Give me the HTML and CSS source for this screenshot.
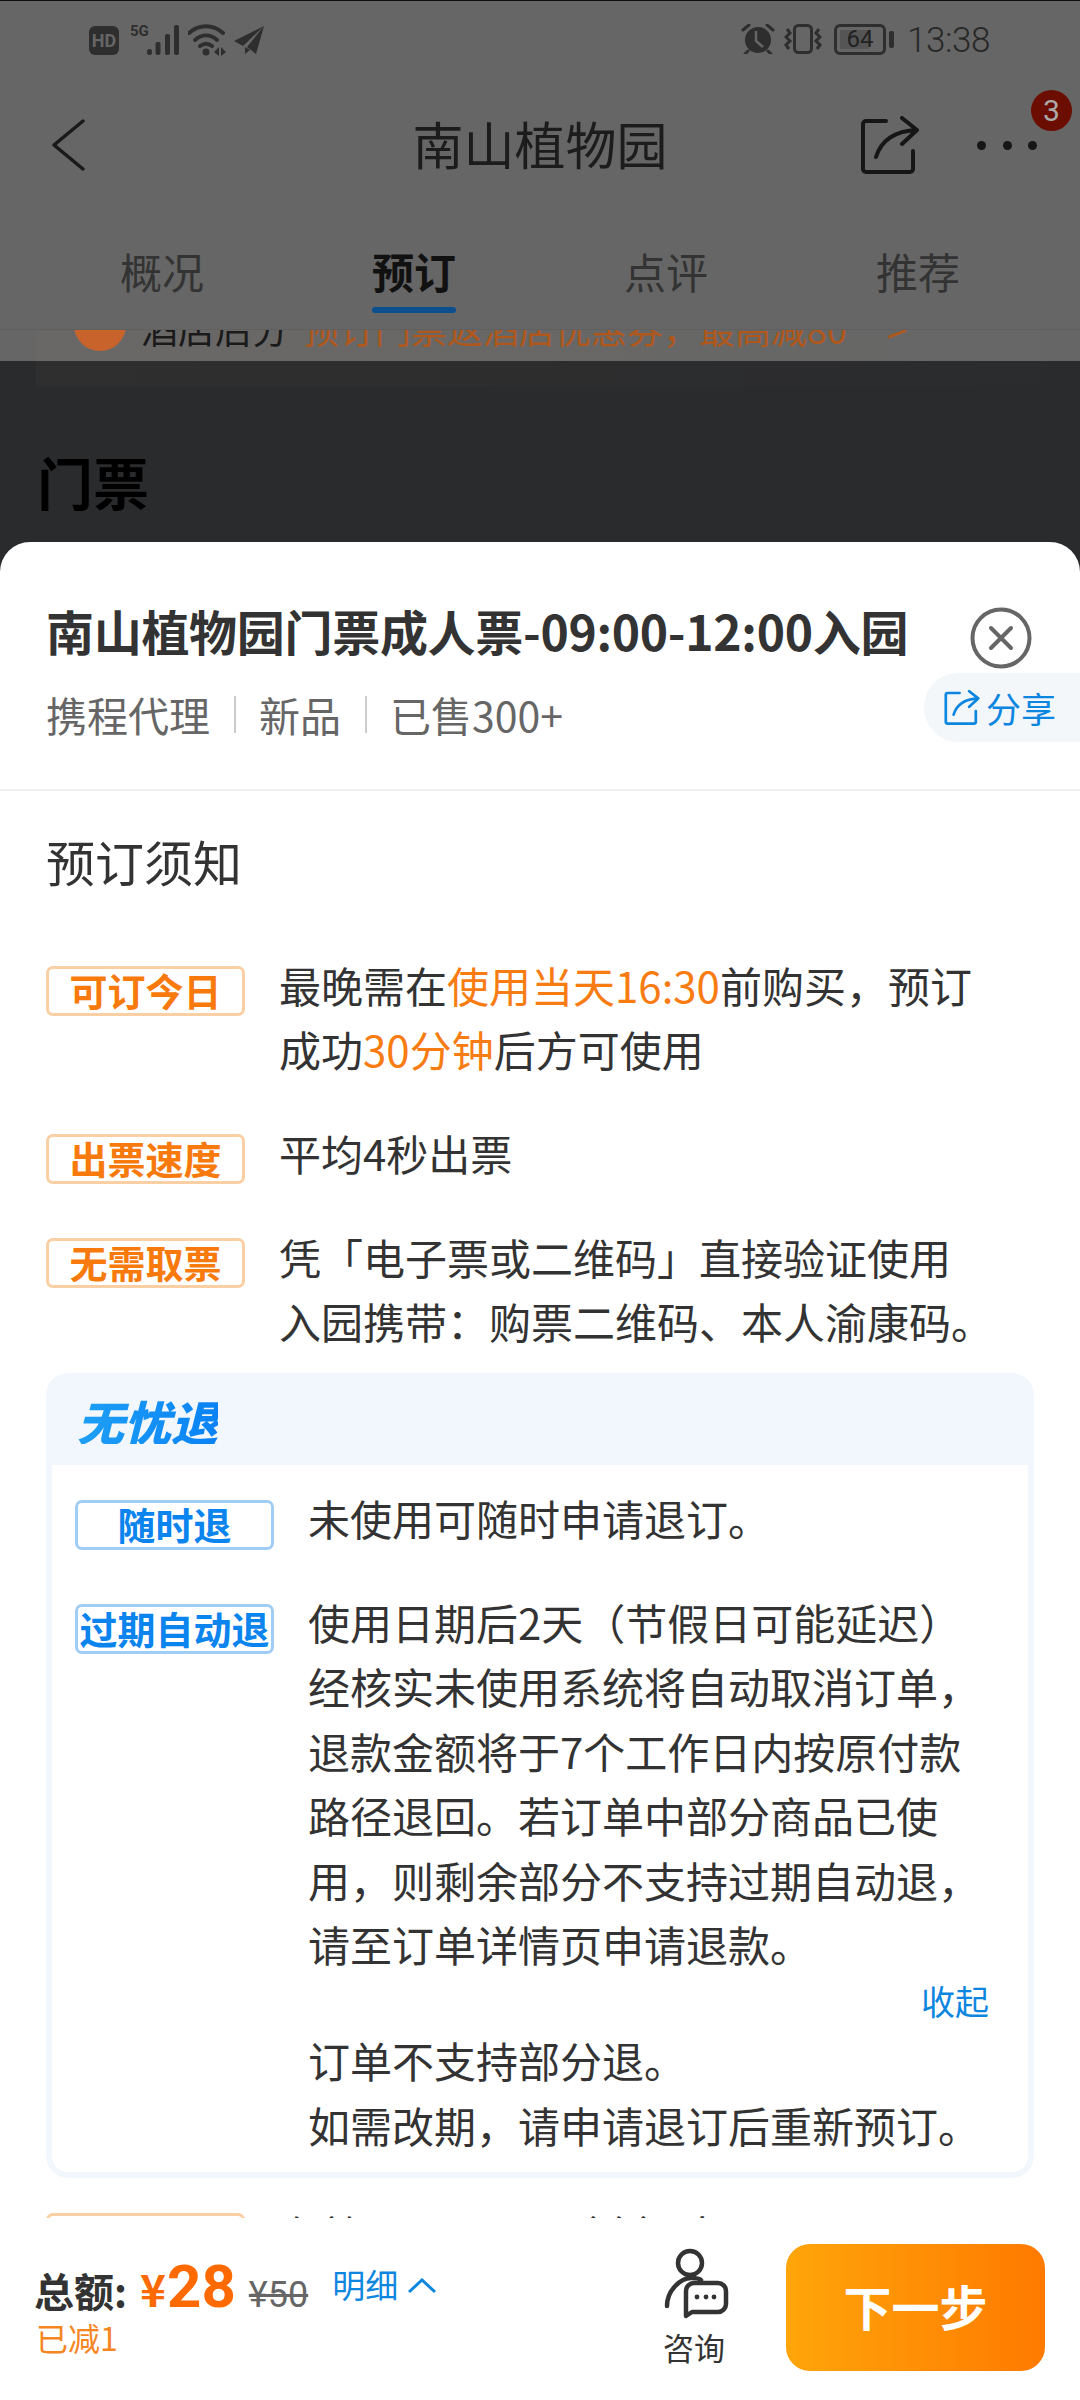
FILE: index.html
```html
<!DOCTYPE html>
<html lang="zh-CN">
<head>
<meta charset="utf-8">
<title>南山植物园</title>
<link rel="stylesheet" href="styles.css">
</head>
<body>
<div class="page">
  <header class="topbar">
    <div class="status">
      <div class="status-left">
        <span class="hd">HD</span>
        <span class="five-g">5G</span>
        <svg class="ic-bars" viewBox="0 0 32 30"><rect x="0" y="24" width="5" height="6" rx="2.5"/><rect x="8.5" y="17" width="5" height="13" rx="2"/><rect x="18" y="9" width="5" height="21" rx="2"/><rect x="27" y="0" width="5" height="30" rx="2"/></svg>
        <svg class="ic-wifi" viewBox="0 0 38 32"><path class="stroke" d="M1 9C11 0 25 0 35 9"/><path class="stroke" d="M7 16C14 10 22 10 29 16"/><path class="stroke" d="M12 22C16 19 20 19 24 22"/><circle cx="18" cy="28" r="3.5"/><path d="M26 28l5-5v9zM33 23l5 5-5 4z"/></svg>
        <svg class="ic-plane" viewBox="0 0 30 28"><path d="M30 0L0 15l9 5zM30 0L13 21l9 7zM11 21l0 7 5-4z"/></svg>
      </div>
      <div class="status-right">
        <svg class="ic-alarm" viewBox="0 0 34 30"><circle cx="17" cy="16" r="13"/><path class="stroke-thin" d="M2 6L8 1M32 6L26 1M7 27L4 30M27 27L30 30"/><path class="hand" d="M15 7V17L22 23"/></svg>
        <svg class="ic-vibrate" viewBox="0 0 38 30"><rect x="10.5" y="1.5" width="17" height="27" rx="4"/><path d="M3 5L6 9 2 13 6 17 2 21 5 25M35 5L32 9 36 13 32 17 36 21 33 25"/></svg>
        <div class="battery"><span class="battery-num">64</span></div>
        <span class="battery-nub"></span>
        <span class="clock">13:38</span>
      </div>
    </div>
    <nav class="nav">
      <svg class="ic-back" viewBox="0 0 34 52"><path d="M31 2L2 26 31 50"/></svg>
      <h1 class="nav-title">南山植物园</h1>
      <div class="nav-actions">
        <svg class="ic-share" viewBox="0 0 60 60"><path d="M26 5H6a3 3 0 0 0-3 3V53a3 3 0 0 0 3 3H50a3 3 0 0 0 3-3V35M16 41C21 25 34 15 57 14M42 2L57 14 42 28"/></svg>
        <div class="more"><i></i><i></i><i></i><span class="badge">3</span></div>
      </div>
    </nav>
    <div class="tabs">
      <div class="tab">概况</div>
      <div class="tab tab-active">预订</div>
      <div class="tab">点评</div>
      <div class="tab">推荐</div>
    </div>
  </header>

  <section class="behind">
    <div class="promo">
      <div class="promo-row">
        <span class="promo-dot"></span>
        <span class="promo-label">酒店后分</span>
        <span class="promo-text">预订门票返酒店优惠券，最高减80</span>
        <span class="promo-arrow">&gt;</span>
      </div>
    </div>
    <h2 class="behind-title">门票</h2>
  </section>

  <section class="sheet">
    <div class="sheet-head">
      <div class="title-row">
        <h2 class="sheet-title">南山植物园门票成人票-09:00-12:00入园</h2>
        <svg class="ic-close" viewBox="0 0 62 62"><circle cx="31" cy="31" r="28.5"/><path d="M21 21L41 41M41 21L21 41"/></svg>
      </div>
      <div class="sub-row">
        <div class="meta">
          <span>携程代理</span><i class="sep"></i><span>新品</span><i class="sep"></i><span>已售300+</span>
        </div>
        <div class="share-pill">
          <svg class="ic-share-small" viewBox="0 0 60 60"><path d="M26 5H6a3 3 0 0 0-3 3V53a3 3 0 0 0 3 3H50a3 3 0 0 0 3-3V35M16 41C21 25 34 15 57 14M42 2L57 14 42 28"/></svg>
          <span>分享</span>
        </div>
      </div>
    </div>

    <div class="sheet-body">
      <h3 class="notice-title">预订须知</h3>

      <div class="row">
        <span class="tag">可订今日</span>
        <p class="row-text">最晚需在<em>使用当天16:30</em>前购买，预订<br>成功<em>30分钟</em>后方可使用</p>
      </div>
      <div class="row">
        <span class="tag">出票速度</span>
        <p class="row-text">平均4秒出票</p>
      </div>
      <div class="row">
        <span class="tag">无需取票</span>
        <p class="row-text">凭「电子票或二维码」直接验证使用<br>入园携带：购票二维码、本人渝康码。</p>
      </div>

      <div class="refund">
        <div class="refund-head"><span class="refund-logo">无忧退</span></div>
        <div class="refund-body">
          <div class="row">
            <span class="tag tag-blue">随时退</span>
            <p class="row-text">未使用可随时申请退订。</p>
          </div>
          <div class="row row-flush">
            <span class="tag tag-blue">过期自动退</span>
            <p class="row-text">使用日期后2天（节假日可能延迟）<br>经核实未使用系统将自动取消订单，<br>退款金额将于7个工作日内按原付款<br>路径退回。若订单中部分商品已使<br>用，则剩余部分不支持过期自动退，<br>请至订单详情页申请退款。</p>
          </div>
          <div class="collapse">收起</div>
          <p class="row-text refund-note">订单不支持部分退。<br>如需改期，请申请退订后重新预订。</p>
        </div>
      </div>

      <div class="row row-peek">
        <span class="tag">入园时间</span>
        <p class="row-text">有效2023-10-1（含）当日</p>
      </div>
    </div>

    <footer class="bottom">
      <div class="price">
        <div class="price-line">
          <span class="total-label">总额:</span>
          <span class="yen">¥</span><span class="amount">28</span>
          <span class="old">¥50</span>
          <span class="detail">明细</span>
          <svg class="ic-up" viewBox="0 0 30 16"><path d="M2 14L15 2 28 14"/></svg>
        </div>
        <div class="reduced">已减1</div>
      </div>
      <div class="consult">
        <svg class="ic-consult" viewBox="0 0 72 75"><circle cx="31" cy="18" r="12"/><path d="M8 61C8 45 22 33 32 33 36 33 40 33 42 35"/><path d="M27 71V46a8 8 0 0 1 8-8H59a8 8 0 0 1 8 8V59a8 8 0 0 1-8 8H33Z"/><circle class="dot" cx="38" cy="52" r="2.4"/><circle class="dot" cx="47" cy="52" r="2.4"/><circle class="dot" cx="55" cy="52" r="2.4"/></svg>
        <span>咨询</span>
      </div>
      <button class="next">下一步</button>
    </footer>
  </section>
</div>
</body>
</html>
```
FILE: styles.css
```css
* { box-sizing: border-box; }
html, body { margin: 0; padding: 0; }
body { font-family: "Noto Sans CJK SC", "Noto Sans", sans-serif; background: #fff; }
h1, h2, h3, p { margin: 0; font-weight: normal; }
em { font-style: normal; color: #f87c12; }
i { font-style: normal; }

.page { width: 1080px; height: 2400px; overflow: hidden; display: flex; flex-direction: column; background: #2a2b2d; }

/* dimmed header */
.topbar { height: 330px; background: #666; border-top: 1px solid #111; border-bottom: 1px solid #5f5f5f; flex: none; }

.status { height: 69px; display: flex; justify-content: space-between; align-items: flex-start; padding: 23px 90px 0 89px; }
.status-left { display: flex; align-items: flex-start; }
.status-right { display: flex; align-items: flex-start; }

.hd { width: 30px; height: 29px; margin-top: 2px; border-radius: 6px; background: #2e2e2e; color: #666; font: bold 18px/29px "Roboto", sans-serif; text-align: center; }
.five-g { width: 17px; margin-left: 11px; color: #2e2e2e; font: bold 15px/14px "Roboto", sans-serif; }
.ic-bars { width: 32px; height: 30px; margin-top: 1px; fill: #2e2e2e; }
.ic-wifi { width: 38px; height: 32px; margin-left: 9px; fill: #2e2e2e; }
.ic-wifi .stroke { fill: none; stroke: #2e2e2e; stroke-width: 4; stroke-linecap: round; }
.ic-plane { width: 30px; height: 28px; margin-left: 8px; margin-top: 2px; fill: #2e2e2e; }

.ic-alarm { width: 34px; height: 30px; fill: #2e2e2e; }
.ic-alarm .stroke-thin { fill: none; stroke: #2e2e2e; stroke-width: 3; stroke-linecap: round; }
.ic-alarm .hand { fill: none; stroke: #666; stroke-width: 2.5; }
.ic-vibrate { width: 38px; height: 30px; margin-left: 9px; fill: none; stroke: #2e2e2e; stroke-width: 3; }
.battery { width: 52px; height: 31px; margin-left: 12px; border: 3px solid #2e2e2e; border-radius: 6px; background: linear-gradient(90deg, #555 66%, transparent 66%) no-repeat 3px 3px / 44px 19px; color: #222; font: 24px/25px "Roboto", sans-serif; text-align: center; }
.battery-nub { width: 5px; height: 17px; margin: 7px 0 0 3px; border-radius: 2px; background: #2e2e2e; }
.clock { margin-left: 13px; color: #282828; font: 300 35px/34px "Roboto", sans-serif; letter-spacing: -0.4px; }

.nav { height: 150px; padding: 0 43px; display: grid; grid-template-columns: 1fr auto 1fr; align-items: center; }
.ic-back { width: 34px; height: 52px; margin-left: 9px; fill: none; stroke: #1a1a1a; stroke-width: 3.5; stroke-linecap: round; stroke-linejoin: round; }
.nav-title { font-size: 51px; line-height: 60px; color: #1c1c1c; margin-top: -5px; }
.nav-actions { display: flex; justify-content: flex-end; align-items: center; }
.ic-share { width: 60px; height: 60px; margin-top: 2px; fill: none; stroke: #161616; stroke-width: 4; stroke-linecap: round; stroke-linejoin: round; }
.more { position: relative; display: flex; gap: 16.5px; margin-left: 57px; }
.more i { width: 9px; height: 9px; border-radius: 50%; background: #161616; }
.badge { position: absolute; right: -35px; top: -51px; width: 41px; height: 41px; border-radius: 50%; background: #6b0d00; color: #aaa; font: 30px/41px "Roboto", sans-serif; text-align: center; }

.tabs { height: 109px; padding: 23px 36px 0; display: grid; grid-template-columns: repeat(4, 252px); }
.tab { height: 56px; line-height: 56px; text-align: center; font-size: 42px; color: #333; position: relative; }
.tab-active { font-weight: bold; color: #111; }
.tab-active::after { content: ""; position: absolute; left: 84px; bottom: -14px; width: 84px; height: 6px; border-radius: 3px; background: #0b4f8e; }

/* dimmed page behind the sheet */
.behind { height: 212px; flex: none; background: linear-gradient(#666 31px, #2a2b2d 31px); }
.promo { height: 57px; margin: 0 36px; overflow: hidden; background: linear-gradient(90deg, rgba(255,190,130,.025), rgba(255,190,130,.005)); }
.promo-row { height: 52px; margin-top: -28px; padding-left: 38px; display: flex; align-items: center; font-size: 37px; white-space: nowrap; }
.promo-dot { width: 52px; height: 52px; margin-top: -6px; border-radius: 50%; background: #c9632c; }
.promo-label { margin-left: 15px; color: #1a1a1a; }
.promo-text { margin-left: 14px; font-size: 36px; color: #b0581c; }
.promo-arrow { margin-left: 40px; color: #b0581c; }
.behind-title { margin: 64px 0 0 37px; font-size: 56px; line-height: 60px; font-weight: bold; color: #000; }

/* sheet */
.sheet { flex: 1; min-height: 0; background: #fff; border-radius: 30px 30px 0 0; display: flex; flex-direction: column; }
.sheet-head { height: 249px; flex: none; border-bottom: 2px solid #f0f0f0; }
.title-row { display: flex; align-items: flex-start; padding: 56px 48px 0 46px; justify-content: space-between; }
.sheet-title { font-size: 48px; line-height: 64px; font-weight: bold; color: #333; white-space: nowrap; letter-spacing: -0.3px; }
.ic-close { width: 62px; height: 62px; margin: 9px 0 0 0; fill: none; stroke: #666; stroke-width: 4; stroke-linecap: round; }
.sub-row { display: flex; justify-content: space-between; align-items: flex-start; padding-left: 46px; margin-top: 0; }
.meta { display: flex; align-items: center; font-size: 41px; line-height: 64px; color: #666; margin-top: 13px; }
.sep { width: 2px; height: 37px; margin: 0 23px 0 24px; background: #ccc; }
.share-pill { width: 156px; height: 69px; margin-top: 4px; padding-left: 20px; display: flex; align-items: center; gap: 6px; border-radius: 34px 0 0 34px; background: #f4f7fa; color: #0d86e0; font-size: 35px; line-height: 69px; }
.ic-share-small { width: 36px; height: 36px; fill: none; stroke: #0d86e0; stroke-width: 4.5; stroke-linecap: round; stroke-linejoin: round; }

.sheet-body { flex: 1; min-height: 0; overflow: hidden; padding: 0 46px; }
.notice-title { margin-top: 37px; margin-bottom: 58.5px; font-size: 49px; line-height: 66px; color: #333; }
.row { display: flex; gap: 34px; margin-bottom: 40px; }
.row-text { font-size: 42px; line-height: 64px; color: #333; white-space: nowrap; }
.tag { flex: none; width: 199px; height: 50px; margin-top: 13.5px; border: 3px solid #f9cfa3; border-radius: 7px; color: #f87a0c; font-size: 38px; font-weight: bold; line-height: 41px; text-align: center; white-space: nowrap; }
.tag-blue { border-color: #9fcdf3; color: #0b84ee; margin-top: 14px; }

.refund { margin-top: -20px; width: 988px; height: 805px; border: 6px solid #f2f7fe; border-top: 0; border-radius: 22px; overflow: hidden; }
.refund-head { height: 92px; margin: 0 -6px; padding: 25px 0 0 31px; background: #f2f7fe; }
.refund-logo { display: inline-block; font-size: 47px; line-height: 46px; font-weight: 900; font-style: italic; color: transparent; background: linear-gradient(90deg, #1ea0f5, #0a82f5); -webkit-background-clip: text; background-clip: text; }
.refund-body { padding: 21px 39px 0 23px; }
.refund-body .row-text { line-height: 64.4px; }
.refund-body .row-flush { margin-bottom: 0; }
.collapse { height: 52px; line-height: 50px; text-align: right; font-size: 34px; color: #0d86e0; }
.refund-note { padding-left: 233px; }
.row-peek { margin-top: 35px; margin-bottom: 0; }
.row-peek .tag { margin-top: 0; }
.row-peek .row-text { margin-top: -11px; }

/* bottom bar */
.bottom { height: 182px; flex: none; background: #fff; display: flex; align-items: flex-start; padding: 26px 35px 0 36px; position: relative; }
.price { width: 595px; padding-top: 12px; }
.price-line { display: flex; align-items: baseline; height: 62px; margin-left: -2px; }
.total-label { font-size: 40px; line-height: 46px; font-weight: bold; color: #333; }
.yen { margin-left: 13px; font-size: 44px; line-height: 46px; font-weight: bold; color: #ff6a00; }
.amount { margin-left: 1px; font: bold 60px/62px "Roboto", sans-serif; color: #ff6a00; }
.old { margin-left: 13px; font: 36px/40px "Roboto", sans-serif; color: #666; text-decoration: line-through; }
.detail { margin-left: 24px; font-size: 33px; line-height: 40px; color: #0d86e0; position: relative; top: -9px; }
.ic-up { width: 30px; height: 16px; margin-left: 9px; fill: none; stroke: #0d86e0; stroke-width: 3; position: relative; top: -13px; }
.reduced { margin-top: 1px; font-size: 32px; line-height: 36px; color: #f5851f; }
.consult { width: 126px; margin-right: 29px; margin-top: 1px; display: flex; flex-direction: column; align-items: center; color: #333; font-size: 31px; line-height: 40px; }
.ic-consult { width: 72px; height: 75px; margin-left: 2px; flex: none; fill: none; stroke: #333; stroke-width: 4.5; stroke-linecap: round; stroke-linejoin: round; }
.ic-consult .dot { fill: #333; stroke: none; }
.consult span { margin-top: 7px; }
.next { width: 259px; height: 127px; border: 0; border-radius: 24px; background: linear-gradient(90deg, #ffa50a, #ff7a00); color: #fff; font: bold 48px/1 "Noto Sans CJK SC", sans-serif; padding: 0 0 6px; }
```
